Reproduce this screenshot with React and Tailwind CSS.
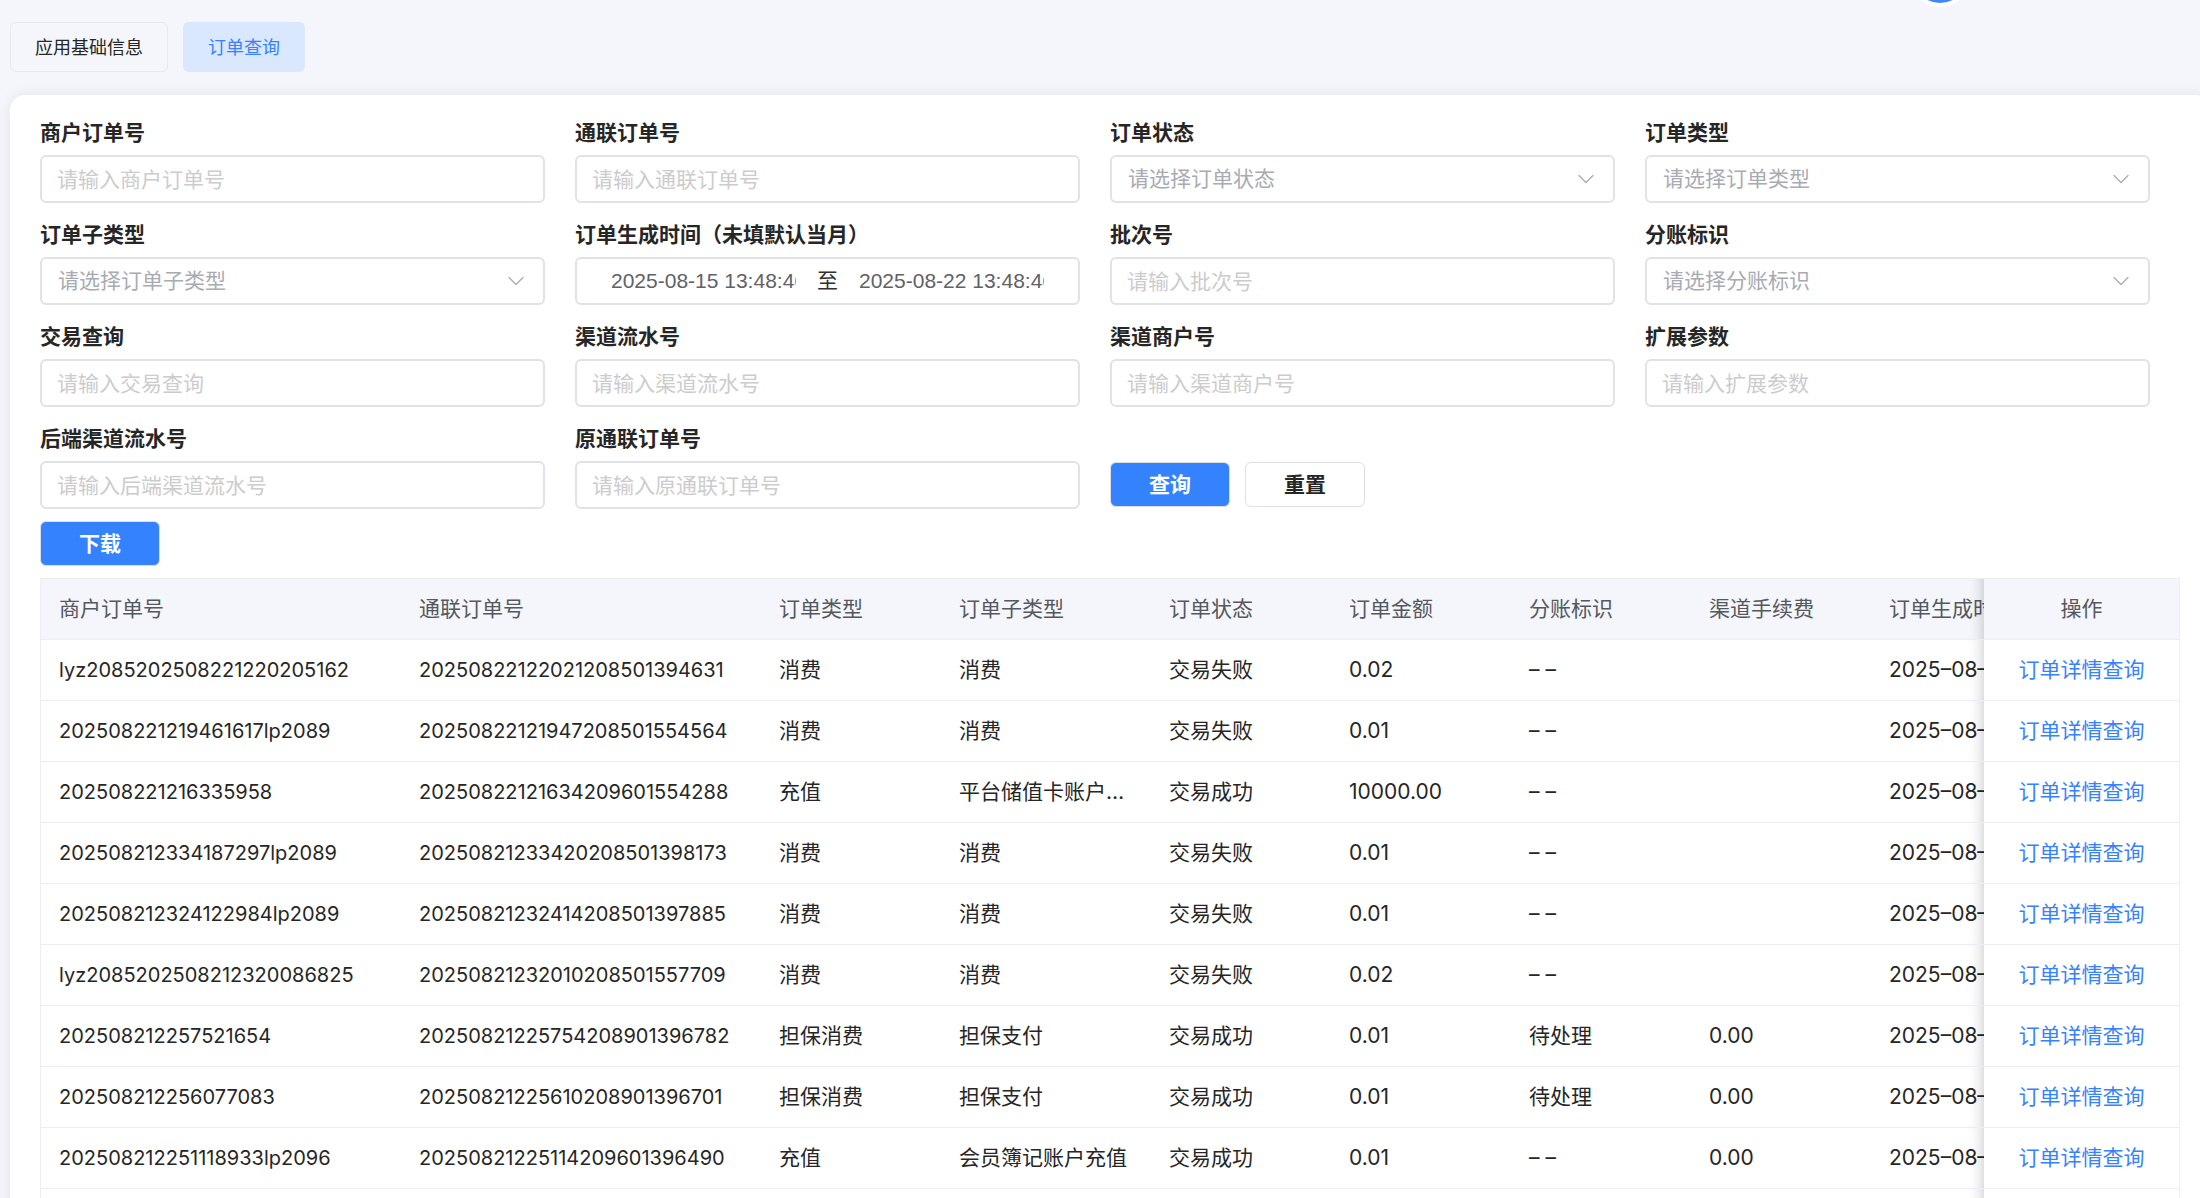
import clsx from 'clsx';

const filters = [
  { id: 'merchantOrderNo', label: '商户订单号', type: 'input' },
  { id: 'allinpayOrderNo', label: '通联订单号', type: 'input' },
  { id: 'orderStatus', label: '订单状态', type: 'select' },
  { id: 'orderType', label: '订单类型', type: 'select' },
  { id: 'orderSubType', label: '订单子类型', type: 'select' },
  { id: 'createdAt', label: '订单生成时间（未填默认当月）', type: 'range' },
  { id: 'batchNo', label: '批次号', type: 'input' },
  { id: 'splitFlag', label: '分账标识', type: 'select' },
  { id: 'tradeQuery', label: '交易查询', type: 'input' },
  { id: 'channelSerialNo', label: '渠道流水号', type: 'input' },
  { id: 'channelMerchantNo', label: '渠道商户号', type: 'input' },
  { id: 'extParams', label: '扩展参数', type: 'input' },
  { id: 'backendSerialNo', label: '后端渠道流水号', type: 'input' },
  { id: 'originOrderNo', label: '原通联订单号', type: 'input' },
];

const columns = [
  { title: '商户订单号', width: 'w-[360px]', cell: 'text-[20px]' },
  { title: '通联订单号', width: 'w-[360px]', cell: 'text-[20px]' },
  { title: '订单类型', width: 'w-[180px]' },
  { title: '订单子类型', width: 'w-[210px]' },
  { title: '订单状态', width: 'w-[180px]' },
  { title: '订单金额', width: 'w-[180px]' },
  { title: '分账标识', width: 'w-[180px]' },
  { title: '渠道手续费', width: 'w-[180px]' },
  { title: '订单生成时间', width: 'w-[240px]' },
];

const orders = [
  ['lyz2085202508221220205162', '20250822122021208501394631', '消费', '消费', '交易失败', '0.02', '– –', '', '2025–08–22'],
  ['202508221219461617lp2089', '20250822121947208501554564', '消费', '消费', '交易失败', '0.01', '– –', '', '2025–08–22'],
  ['202508221216335958', '20250822121634209601554288', '充值', '平台储值卡账户充值', '交易成功', '10000.00', '– –', '', '2025–08–22'],
  ['202508212334187297lp2089', '20250821233420208501398173', '消费', '消费', '交易失败', '0.01', '– –', '', '2025–08–21'],
  ['202508212324122984lp2089', '20250821232414208501397885', '消费', '消费', '交易失败', '0.01', '– –', '', '2025–08–21'],
  ['lyz2085202508212320086825', '20250821232010208501557709', '消费', '消费', '交易失败', '0.02', '– –', '', '2025–08–21'],
  ['202508212257521654', '20250821225754208901396782', '担保消费', '担保支付', '交易成功', '0.01', '待处理', '0.00', '2025–08–21'],
  ['202508212256077083', '20250821225610208901396701', '担保消费', '担保支付', '交易成功', '0.01', '待处理', '0.00', '2025–08–21'],
  ['202508212251118933lp2096', '20250821225114209601396490', '充值', '会员簿记账户充值', '交易成功', '0.01', '– –', '0.00', '2025–08–21'],
];

const controlClass =
  'h-12 w-full rounded-md border-2 border-[#dfe2e9] bg-white text-[21px] outline-none focus:border-[#3582ff]';

// Fixed right column, with the shadow painted on its left side only
const fixedRightClass =
  "sticky right-0 before:pointer-events-none before:absolute before:inset-y-0 before:right-full before:w-[15px] before:shadow-[inset_-15px_0_15px_-15px_rgba(0,0,0,0.25)] before:content-['']";

function ChevronDown() {
  return (
    <svg
      viewBox="0 0 18 18"
      className="pointer-events-none absolute top-1/2 right-5 size-[18px] -translate-y-1/2"
      fill="none"
      stroke="#a8abb2"
      strokeWidth="1.3"
      strokeLinecap="round"
      strokeLinejoin="round"
      aria-hidden="true"
    >
      <path d="M2 5.5 9 12.5 16 5.5" />
    </svg>
  );
}

function Control({ id, label, type }) {
  if (type === 'select') {
    return (
      <div className="relative">
        <select
          id={id}
          defaultValue=""
          className={clsx(controlClass, 'appearance-none pr-12 pl-4 text-[#a8abb2]')}
        >
          <option value="">{`请选择${label}`}</option>
        </select>
        <ChevronDown />
      </div>
    );
  }

  if (type === 'range') {
    return (
      <div className={clsx(controlClass, 'flex items-center px-[34px]')}>
        <input
          id={id}
          type="text"
          defaultValue="2025-08-15 13:48:46"
          className="h-8 w-0 min-w-0 flex-1 font-['Liberation_Sans',sans-serif] text-[#606266] outline-none"
        />
        <span className="w-[63px] text-center text-[#303133]">至</span>
        <input
          type="text"
          aria-label="结束时间"
          defaultValue="2025-08-22 13:48:46"
          className="h-8 w-0 min-w-0 flex-1 font-['Liberation_Sans',sans-serif] text-[#606266] outline-none"
        />
      </div>
    );
  }

  return (
    <input
      id={id}
      type="text"
      placeholder={`请输入${label}`}
      className={clsx(controlClass, 'px-[15px] text-[#606266] placeholder:text-[#cccccc]')}
    />
  );
}

function ActionButton({ primary, children }) {
  return (
    <button
      type="button"
      className={clsx(
        'h-[45px] w-[120px] rounded-md border border-[#dcdfe6] text-[21px] leading-none font-semibold',
        primary ? 'bg-[#3582ff] text-white' : 'bg-white text-[#262626]',
      )}
    >
      {children}
    </button>
  );
}

function FilterForm() {
  return (
    <form className="grid grid-cols-4 gap-y-[6px]">
      {filters.map((filter) => (
        <div key={filter.id} className="pr-[30px]">
          <label
            htmlFor={filter.id}
            className="block h-12 pt-3 text-[21px] leading-7 font-semibold text-[#262626]"
          >
            {filter.label}
          </label>
          <Control {...filter} />
        </div>
      ))}
      <div className="flex items-end gap-[15px] pb-[2px]">
        <ActionButton primary>查询</ActionButton>
        <ActionButton>重置</ActionButton>
      </div>
    </form>
  );
}

function OrderTable() {
  return (
    <div className="overflow-hidden border border-[#ebeef5]">
      <table className="w-full table-fixed border-separate border-spacing-0 text-left text-[21px]">
        <thead className="text-[#55585e]">
          <tr>
            {columns.map((column) => (
              <th
                key={column.title}
                className={clsx(
                  'h-[61px] overflow-hidden border-b border-[#ebeef5] bg-[#f4f6fb] px-[18px] font-normal whitespace-nowrap',
                  column.width,
                )}
              >
                {column.title}
              </th>
            ))}
            <th
              className={clsx(
                'h-[61px] w-[195px] border-b border-[#ebeef5] bg-[#f4f6fb] text-center font-normal',
                fixedRightClass,
              )}
            >
              操作
            </th>
          </tr>
        </thead>
        <tbody className="text-[#262626]">
          {orders.map((order) => (
            <tr key={order[1]}>
              {order.map((value, index) => (
                <td
                  key={columns[index].title}
                  className={clsx(
                    'h-[61px] truncate border-b border-[#ebeef5] px-[18px]',
                    columns[index].cell,
                  )}
                >
                  {value}
                </td>
              ))}
              <td
                className={clsx(
                  'h-[61px] border-b border-[#ebeef5] bg-white text-center',
                  fixedRightClass,
                )}
              >
                <a href="#detail" className="text-[#3582ff]">
                  订单详情查询
                </a>
              </td>
            </tr>
          ))}
          <tr>
            <td colSpan={columns.length} className="h-[61px]" />
            <td className={clsx('bg-white', fixedRightClass)} />
          </tr>
        </tbody>
      </table>
    </div>
  );
}

export default function App() {
  return (
    <div className="relative h-screen overflow-hidden bg-[#f4f6fb] pt-[22px] pl-[10px] font-[Inter,'Noto_Sans_CJK_SC',sans-serif]">
      <div className="absolute -top-[55px] right-[229px] size-[62px] rounded-full border-4 border-white bg-[#3f86ff]" />

      <nav className="flex gap-[15px] text-[18px]">
        <button
          type="button"
          className="h-[50px] rounded-md border border-[#e6e8ec] px-6 text-[#262626]"
        >
          应用基础信息
        </button>
        <button type="button" className="h-[50px] rounded-md bg-[#d9e7ff] px-[25px] text-[#3582ff]">
          订单查询
        </button>
      </nav>

      <main className="mt-[23px] -mr-[10px] rounded-[15px] bg-white px-[30px] pt-3 pb-[30px] shadow-[0_0_15px_rgba(0,0,0,0.08)]">
        <FilterForm />
        <div className="mt-3 mb-3 flex">
          <ActionButton primary>下载</ActionButton>
        </div>
        <OrderTable />
      </main>
    </div>
  );
}
